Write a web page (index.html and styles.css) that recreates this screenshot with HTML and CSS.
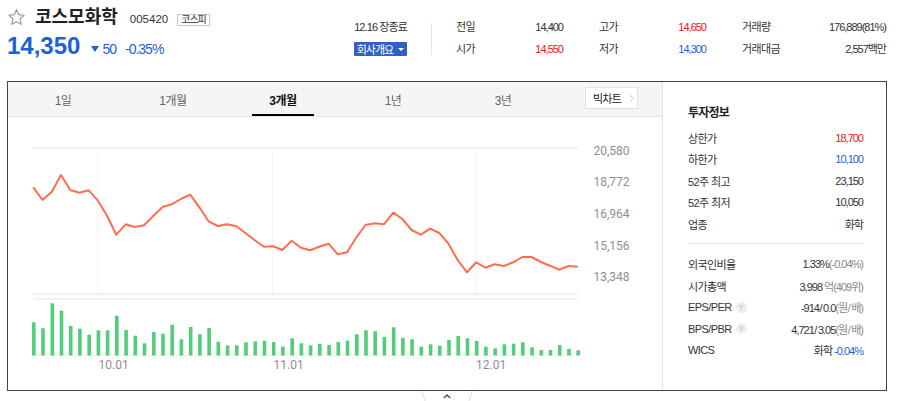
FILE: index.html
```html
<!DOCTYPE html>
<html lang="ko">
<head>
<meta charset="utf-8">
<title>코스모화학</title>
<link rel="stylesheet" href="styles.css">
</head>
<body>
<header class="top">
  <div class="ident">
    <div class="title-row">
      <svg class="star" viewBox="0 0 24 24"><polygon points="12,2.2 14.9,8.4 21.6,9.2 16.6,13.8 17.9,20.6 12,17.3 6.1,20.6 7.4,13.8 2.4,9.2 9.1,8.4" fill="none" stroke="#9a9a9a" stroke-width="1.5" stroke-linejoin="round"/></svg>
      <h1 class="name">코스모화학</h1>
      <span class="code">005420</span>
      <span class="market">코스피</span>
    </div>
    <div class="price-row">
      <span class="price">14,350</span>
      <span class="chg"><span class="tri"></span>50</span>
      <span class="rate">-0.35%</span>
    </div>
  </div>
  <div class="status">
    <div class="date">12.16 장종료</div>
    <button class="overview">회사개요<span class="caret"></span></button>
  </div>
  <div class="vsep"></div>
  <div class="stats">
    <dl class="stat">
      <dt>전일</dt><dd>14,400</dd>
      <dt>시가</dt><dd class="up">14,550</dd>
    </dl>
    <dl class="stat">
      <dt>고가</dt><dd class="up">14,650</dd>
      <dt>저가</dt><dd class="down">14,300</dd>
    </dl>
    <dl class="stat">
      <dt>거래량</dt><dd>176,889(81%)</dd>
      <dt>거래대금</dt><dd>2,557백만</dd>
    </dl>
  </div>
</header>

<section class="board">
  <div class="chart">
    <nav class="tabs">
      <div class="tab"><span>1일</span></div>
      <div class="tab"><span>1개월</span></div>
      <div class="tab on"><span>3개월</span></div>
      <div class="tab"><span>1년</span></div>
      <div class="tab"><span>3년</span></div>
      <a class="big">빅차트<svg class="chev" viewBox="0 0 5 9"><polyline points="1,1 4,4.5 1,8" fill="none" stroke="#c8c8c8" stroke-width="1"/></svg></a>
    </nav>
    <svg class="plot" width="654" height="273" viewBox="8 117 654 273">
      <g fill="#f1f1f1">
        <rect x="33" y="147" width="545" height="2"/>
        <rect x="33" y="293" width="545" height="2"/>
        <rect x="33" y="298" width="545" height="2"/>
        <rect x="97.5" y="149" width="1" height="144"/>
        <rect x="272.5" y="149" width="1" height="144"/>
        <rect x="475.5" y="149" width="1" height="144"/>
        <rect x="33" y="355" width="545" height="1"/>
      </g>
      <polyline fill="none" stroke="#ff6d4e" stroke-width="2" stroke-linejoin="round" points="33.3,187.3 42.5,200 51.8,191.7 61,175 70.2,190 79.4,192.7 88.7,190.3 97.9,200.7 107.1,215.7 116.3,234.7 125.6,224.3 134.8,227 144,225.3 153.3,216 162.5,207 171.7,204.3 180.9,199 190.2,194.7 199.4,207.3 208.6,221.3 217.8,226 227.1,224.3 236.3,226.3 245.5,233 254.8,240.3 264,246.7 273.2,246.3 282.4,250 291.7,240.7 300.9,247.7 310.1,250.3 319.3,246.7 328.6,243.7 337.8,254.3 347,252.3 356.2,237.7 365.5,225 374.7,223.3 383.9,224.3 393.2,212.7 402.4,219 411.6,230 420.8,234.7 430.1,228.7 439.3,233 448.5,243.7 457.7,260 467,272.3 476.2,262.3 485.4,267.7 494.7,264.3 503.9,266 513.1,262.3 522.3,257 531.6,257 540.8,262 550,265.7 559.2,269.7 568.5,266 577.7,266.7"/>
      <g fill="#52cd79">
        <rect x="32" y="322.3" width="3.6" height="33.2"/>
        <rect x="41.2" y="328.3" width="3.6" height="27.2"/>
        <rect x="50.5" y="303.3" width="3.6" height="52.2"/>
        <rect x="59.7" y="310.7" width="3.6" height="44.8"/>
        <rect x="68.9" y="326" width="3.6" height="29.5"/>
        <rect x="78.1" y="328.7" width="3.6" height="26.8"/>
        <rect x="87.4" y="334.7" width="3.6" height="20.8"/>
        <rect x="96.6" y="330.3" width="3.6" height="25.2"/>
        <rect x="105.8" y="330.3" width="3.6" height="25.2"/>
        <rect x="115" y="315.7" width="3.6" height="39.8"/>
        <rect x="124.3" y="330" width="3.6" height="25.5"/>
        <rect x="133.5" y="335.7" width="3.6" height="19.8"/>
        <rect x="142.7" y="343.3" width="3.6" height="12.2"/>
        <rect x="152" y="332" width="3.6" height="23.5"/>
        <rect x="161.2" y="333.7" width="3.6" height="21.8"/>
        <rect x="170.4" y="324.7" width="3.6" height="30.8"/>
        <rect x="179.6" y="339.3" width="3.6" height="16.2"/>
        <rect x="188.9" y="327" width="3.6" height="28.5"/>
        <rect x="198.1" y="334.3" width="3.6" height="21.2"/>
        <rect x="207.3" y="328" width="3.6" height="27.5"/>
        <rect x="216.5" y="341.7" width="3.6" height="13.8"/>
        <rect x="225.8" y="345.3" width="3.6" height="10.2"/>
        <rect x="235" y="345.3" width="3.6" height="10.2"/>
        <rect x="244.2" y="342.3" width="3.6" height="13.2"/>
        <rect x="253.5" y="341.3" width="3.6" height="14.2"/>
        <rect x="262.7" y="340.7" width="3.6" height="14.8"/>
        <rect x="271.9" y="342" width="3.6" height="13.5"/>
        <rect x="281.1" y="346.7" width="3.6" height="8.8"/>
        <rect x="290.4" y="338.3" width="3.6" height="17.2"/>
        <rect x="299.6" y="343.3" width="3.6" height="12.2"/>
        <rect x="308.8" y="345.3" width="3.6" height="10.2"/>
        <rect x="318" y="343.7" width="3.6" height="11.8"/>
        <rect x="327.3" y="345" width="3.6" height="10.5"/>
        <rect x="336.5" y="342" width="3.6" height="13.5"/>
        <rect x="345.7" y="340.7" width="3.6" height="14.8"/>
        <rect x="355" y="334.3" width="3.6" height="21.2"/>
        <rect x="364.2" y="330.3" width="3.6" height="25.2"/>
        <rect x="373.4" y="331.3" width="3.6" height="24.2"/>
        <rect x="382.6" y="337" width="3.6" height="18.5"/>
        <rect x="391.9" y="327.3" width="3.6" height="28.2"/>
        <rect x="401.1" y="337.7" width="3.6" height="17.8"/>
        <rect x="410.3" y="339.3" width="3.6" height="16.2"/>
        <rect x="419.5" y="346.7" width="3.6" height="8.8"/>
        <rect x="428.8" y="344.3" width="3.6" height="11.2"/>
        <rect x="438" y="345.7" width="3.6" height="9.8"/>
        <rect x="447.2" y="340" width="3.6" height="15.5"/>
        <rect x="456.4" y="336" width="3.6" height="19.5"/>
        <rect x="465.7" y="338.3" width="3.6" height="17.2"/>
        <rect x="474.9" y="341" width="3.6" height="14.5"/>
        <rect x="484.1" y="346.7" width="3.6" height="8.8"/>
        <rect x="493.4" y="348.3" width="3.6" height="7.2"/>
        <rect x="502.6" y="344.3" width="3.6" height="11.2"/>
        <rect x="511.8" y="343.7" width="3.6" height="11.8"/>
        <rect x="521" y="342.3" width="3.6" height="13.2"/>
        <rect x="530.3" y="347.3" width="3.6" height="8.2"/>
        <rect x="539.5" y="350" width="3.6" height="5.5"/>
        <rect x="548.7" y="350" width="3.6" height="5.5"/>
        <rect x="557.9" y="345" width="3.6" height="10.5"/>
        <rect x="567.2" y="349" width="3.6" height="6.5"/>
        <rect x="576.4" y="350.3" width="3.6" height="5.2"/>
      </g>
      <g class="axis" text-anchor="end">
        <text x="629.5" y="155.3">20,580</text>
        <text x="629.5" y="186.3">18,772</text>
        <text x="629.5" y="218.3">16,964</text>
        <text x="629.5" y="250.3">15,156</text>
        <text x="629.5" y="281.3">13,348</text>
      </g>
      <g class="axis">
        <text x="98.5" y="368.5">10.01</text>
        <text x="273.5" y="368.5">11.01</text>
        <text x="476" y="368.5">12.01</text>
      </g>
    </svg>
  </div>
  <aside class="info">
    <h2>투자정보</h2>
    <div class="rows">
      <div class="row"><span class="k">상한가</span><span class="v up">18,700</span></div>
      <div class="row"><span class="k">하한가</span><span class="v down">10,100</span></div>
      <div class="row"><span class="k">52주 최고</span><span class="v">23,150</span></div>
      <div class="row"><span class="k">52주 최저</span><span class="v">10,050</span></div>
      <div class="row"><span class="k">업종</span><span class="v">화학</span></div>
    </div>
    <div class="rule"></div>
    <div class="rows">
      <div class="row"><span class="k">외국인비율</span><span class="v">1.33%<em>(-0.04%)</em></span></div>
      <div class="row"><span class="k">시가총액</span><span class="v">3,998 <em>억(409위)</em></span></div>
      <div class="row"><span class="k">EPS/PER<i class="help">?</i></span><span class="v">-914<span class="sl">/</span>0.0<em>(원<span class="sl">/</span>배)</em></span></div>
      <div class="row"><span class="k">BPS/PBR<i class="help">?</i></span><span class="v">4,721<span class="sl">/</span>3.05<em>(원<span class="sl">/</span>배)</em></span></div>
      <div class="row"><span class="k">WICS</span><span class="v">화학 <b class="down">-0.04%</b></span></div>
    </div>
  </aside>
</section>
<div class="toggle-wrap">
  <svg class="toggle" viewBox="0 0 52 10"><path d="M0.5 0 L4 10 M51.5 0 L48 10" stroke="#dcdcdc" stroke-width="1" fill="none"/><polyline points="22.8,7 26,4 29.2,7" fill="none" stroke="#555" stroke-width="1.6"/></svg>
</div>
</body>
</html>
```

FILE: styles.css
```css
* { box-sizing: border-box; margin: 0; padding: 0; }
body {
  margin: 0;
  width: 897px;
  height: 401px;
  overflow: hidden;
  background: #fff;
  color: #333;
  font-family: "Liberation Sans", "Noto Sans CJK KR", sans-serif;
}

/* header */
.top { display: flex; align-items: flex-start; height: 81px; }
.ident { width: 350px; flex: none; padding-left: 7px; }
.title-row { display: flex; align-items: baseline; height: 22px; margin-top: 6px; }
.star { width: 19px; height: 19px; flex: none; align-self: center; margin-right: 9px; }
.name { font-size: 18px; font-weight: 700; color: #222; letter-spacing: 0; line-height: 22px; }
.code { font-size: 11.5px; color: #333; margin-left: 12px; }
.market {
  font-size: 10px; letter-spacing: -1px; line-height: 10px; color: #333;
  border: 1px solid #c8c8c8; padding: 0 3px 0 3px; margin-left: 9px;
}
.price-row { display: flex; align-items: baseline; margin-top: 4px; color: #1f5fd6; }
.price { font-size: 24px; font-weight: 700; line-height: 28px; }
.chg { font-size: 14px; letter-spacing: -1px; line-height: 1; margin-left: 11px; }
.tri {
  display: inline-block; width: 0; height: 0; vertical-align: 2px; margin-right: 3px;
  border-left: 4px solid transparent; border-right: 4px solid transparent; border-top: 6px solid #1f5fd6;
}
.rate { font-size: 14px; letter-spacing: -1px; line-height: 1; margin-left: 9px; }

.status { width: 57px; flex: none; display: flex; flex-direction: column; align-items: flex-end; padding-top: 20px; }
.date { font-size: 11px; letter-spacing: -0.9px; line-height: 15px; color: #333; }
.overview {
  margin-top: 7px; width: 53px; height: 14px; border: 0; border-radius: 1px;
  background: #2f60c8; color: #fff;
  font: 11px "Noto Sans CJK KR", sans-serif; letter-spacing: -1px;
  display: flex; align-items: center; justify-content: center; gap: 5px;
}
.caret { border-left: 3px solid transparent; border-right: 3px solid transparent; border-top: 3px solid #fff; }
.vsep { width: 1px; height: 32px; background: #e5e5e5; margin: 23px 24px 0 24px; flex: none; }

.stats { display: grid; grid-template-columns: 107px 107px 144px; column-gap: 36px; margin-top: 16px; align-items: start; }
.stat { display: grid; grid-template-columns: auto auto; grid-auto-rows: 22px; align-content: start; justify-content: space-between; line-height: 22px; }
.stat dt { font-size: 11px; letter-spacing: -0.6px; color: #333; }
.stat dd { font-size: 11px; letter-spacing: -1px; text-align: right; color: #333; }
.up { color: #f01414 !important; }
.down { color: #1f5fd6 !important; }

/* board */
.board { display: flex; margin-left: 7px; width: 880px; height: 310px; border: 1px solid #444; }
.chart { width: 655px; flex: none; border-right: 1px solid #e5e5e5; display: flex; flex-direction: column; }
.tabs { display: flex; height: 35px; background: #f5f5f5; border-bottom: 1px solid #e5e5e5; }
.tab { width: 110px; flex: none; display: flex; justify-content: center; font-size: 12px; letter-spacing: -0.5px; color: #666; }
.tab span { display: flex; align-items: center; padding: 2px 17px 0; border-bottom: 2px solid transparent; }
.tab.on span { border-bottom-color: #000; color: #111; font-weight: 700; }
.big {
  margin: 5px 24px 0 auto; align-self: flex-start; width: 53px; height: 22px;
  background: #fff; border: 1px solid #e2e2e2; color: #222;
  font-size: 11px; letter-spacing: -0.8px;
  display: flex; align-items: center; padding-left: 7px; gap: 8px;
}
.chev { width: 5px; height: 9px; }
.plot { display: block; }
.axis { font-family: Roboto, "Liberation Sans", sans-serif; font-size: 12px; fill: #8e8e8e; }

.info { flex: 1; padding: 21px 23px 0 25px; }
.info h2 { font-size: 12px; font-weight: 700; line-height: 20px; letter-spacing: -0.8px; color: #222; margin-bottom: 4px; }
.row { display: flex; justify-content: space-between; align-items: center; height: 21.5px; }
.k { font-size: 11px; letter-spacing: -0.6px; color: #333; display: flex; align-items: center; }
.v { font-size: 11px; letter-spacing: -1px; color: #333; }
.v em { font-style: normal; color: #888; }
.v b { font-weight: 400; }
.sl { letter-spacing: 0; margin: 0 0.5px; }
.rule { height: 1px; background: #e5e5e5; margin: 8.5px 0 9.5px; }
.help {
  display: inline-flex; align-items: center; justify-content: center;
  width: 11px; height: 11px; border-radius: 50%; margin-left: 4px;
  background: #eee; color: #b0b0b0; font-style: normal; font-size: 8px; letter-spacing: 0;
}

.toggle-wrap { display: flex; justify-content: center; width: 880px; margin-left: 7px; }
.toggle { display: block; width: 52px; height: 10px; }
```
